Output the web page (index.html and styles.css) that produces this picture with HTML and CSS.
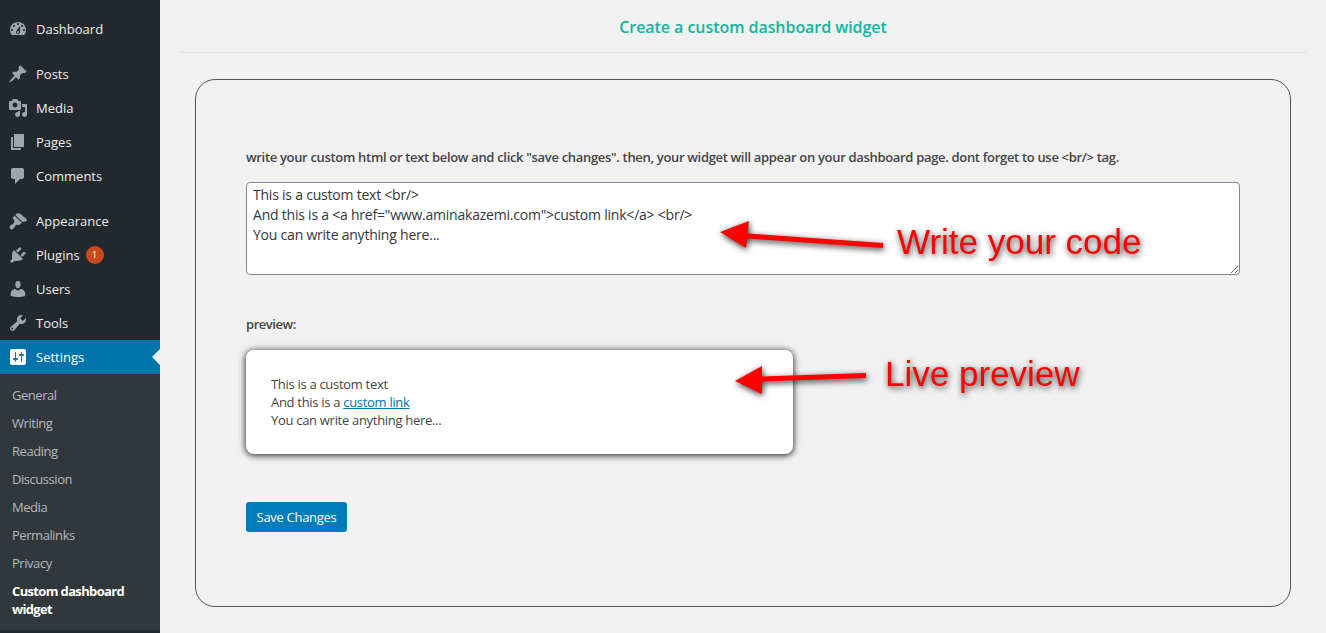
FILE: index.html
```html
<!DOCTYPE html>
<html lang="en">
<head>
<meta charset="utf-8">
<title>Create a custom dashboard widget</title>
<link rel="stylesheet" href="styles.css">
</head>
<body>
<div class="app">
  <nav class="sidebar">
    <ul class="menu">
      <li class="item"><svg class="icon" viewBox="0 0 20 20"><path d="M3.76 16h12.48c1.1-1.37 1.76-3.11 1.76-5 0-4.42-3.58-8-8-8s-8 3.58-8 8c0 1.89.66 3.63 1.76 5zM10 4c.55 0 1 .45 1 1s-.45 1-1 1-1-.45-1-1 .45-1 1-1zM6 6c.55 0 1 .45 1 1s-.45 1-1 1-1-.45-1-1 .45-1 1-1zm8 0c.55 0 1 .45 1 1s-.45 1-1 1-1-.45-1-1 .45-1 1-1zm-5.37 5.55L12 7v6c0 1.1-.9 2-2 2s-2-.9-2-2c0-.57.24-1.08.63-1.45zM4 10c.55 0 1 .45 1 1s-.45 1-1 1-1-.45-1-1 .45-1 1-1zm12 0c.55 0 1 .45 1 1s-.45 1-1 1-1-.45-1-1 .45-1 1-1zm-5 3c0-.55-.45-1-1-1s-1 .45-1 1 .45 1 1 1 1-.45 1-1z"/></svg>Dashboard</li>
      <li class="sep"></li>
      <li class="item"><svg class="icon" viewBox="0 0 20 20"><path d="M10.44 3.02l1.82-1.82 6.36 6.35-1.83 1.82c-1.05-.68-2.48-.57-3.41.36l-.75.75c-.92.93-1.04 2.35-.35 3.41l-1.83 1.82-2.41-2.41-2.8 2.79c-.42.42-3.38 2.71-3.8 2.29s1.86-3.39 2.28-3.81l2.79-2.79L4.1 9.36l1.83-1.82c1.05.69 2.48.57 3.4-.36l.75-.75c.93-.92 1.05-2.35.36-3.41z"/></svg>Posts</li>
      <li class="item"><svg class="icon" viewBox="0 0 20 20"><path d="M13 11V4c0-.55-.45-1-1-1h-1.67L9 1H5L3.67 3H2c-.55 0-1 .45-1 1v7c0 .55.45 1 1 1h10c.55 0 1-.45 1-1zM7 4.5c1.38 0 2.5 1.12 2.5 2.5S8.38 9.5 7 9.5 4.5 8.38 4.5 7 5.62 4.5 7 4.5zM14 6h5v10.5c0 1.38-1.12 2.5-2.5 2.5S14 17.88 14 16.500s1.12-2.500 2.500-2.500c.17 0 .34.02.5.05V9h-3V6zm-4 8.05V13h2v3.500c0 1.38-1.12 2.500-2.500 2.500S7 17.880 7 16.500 8.120 14 9.500 14c.17 0 .34.02.5.05z"/></svg>Media</li>
      <li class="item"><svg class="icon" viewBox="0 0 20 20"><path d="M6 15V2h10v13H6zm-1 1h8v2H3V5h2v11z"/></svg>Pages</li>
      <li class="item"><svg class="icon" viewBox="0 0 20 20"><path d="M5 2h9c1.1 0 2 .9 2 2v7c0 1.1-.9 2-2 2h-2l-5 5v-5H5c-1.1 0-2-.9-2-2V4c0-1.1.9-2 2-2z"/></svg>Comments</li>
      <li class="sep"></li>
      <li class="item"><svg class="icon" viewBox="0 0 20 20"><path d="M14.48 11.06L7.41 3.99l1.5-1.500c.5-.56 2.300-.47 3.510.32 1.210.8 1.430 1.280 2.660 2.510 1.230 1.220 2.220 1.370 2.850 1.980.63.6 1.070 2.350.48 2.950zM6.700 4.700L13.770 11.770l-2.300 2.300c-1-.4-2.600-.8-3.900.4L5.200 17.800c-.8.8-2.200.8-3 0s-.8-2.200 0-3l3.300-2.400c1.200-1.300.8-2.900.4-3.900L4.400 7z"/></svg>Appearance</li>
      <li class="item"><svg class="icon" viewBox="0 0 20 20"><path d="M13.11 4.36L9.87 7.6 8 5.73l3.24-3.24c.35-.34 1.05-.2 1.56.32.52.51.66 1.21.31 1.55zm-8 1.77l.91-1.12 9.01 9.01-1.19.84c-.71.71-2.63 1.16-3.82 1.16H6.14L4.9 17.26c-.59.59-1.54.59-2.12 0-.59-.58-.59-1.53 0-2.12l1.24-1.24v-3.88c0-1.13.4-3.07 1.09-3.89zm7.26 3.97l3.24-3.24c.34-.35 1.04-.21 1.55.31.52.51.66 1.21.31 1.55l-3.24 3.25z"/></svg>Plugins<span class="badge">1</span></li>
      <li class="item"><svg class="icon" viewBox="0 0 20 20"><path d="M10 9.25c-2.27 0-2.73-3.44-2.73-3.44C7 4.02 7.82 2 9.97 2c2.16 0 2.98 2.02 2.71 3.81 0 0-.41 3.44-2.68 3.44zm0 2.57L12.72 10c2.39 0 4.52 2.33 4.52 4.53v2.49s-3.65 1.13-7.24 1.13c-3.65 0-7.24-1.13-7.24-1.13v-2.49c0-2.25 1.94-4.48 4.47-4.48z"/></svg>Users</li>
      <li class="item"><svg class="icon" viewBox="0 0 20 20"><path d="M16.68 9.77c-1.34 1.34-3.3 1.67-4.95.99l-5.41 6.52c-.99.99-2.59.99-3.57 0-.99-.98-.99-2.58 0-3.57l6.52-5.42c-.68-1.65-.35-3.61.99-4.95 1.28-1.28 3.12-1.62 4.72-1.06l-2.89 2.89 2.82 2.82 2.86-2.87c.53 1.58.18 3.41-1.09 4.67zM4.93 16.14c.39-.39.39-1.02 0-1.41s-1.02-.39-1.41 0-.39 1.02 0 1.41 1.02.39 1.41 0z"/></svg>Tools</li>
      <li class="item active"><svg class="icon" viewBox="0 0 20 20"><path d="M18 16V4c0-1.1-.9-2-2-2H4c-1.1 0-2 .9-2 2v12c0 1.1.9 2 2 2h12c1.1 0 2-.9 2-2zM8 11h1c.55 0 1 .45 1 1s-.45 1-1 1H8v1.500c0 .28-.22.500-.5.500s-.5-.22-.5-.500V13H6c-.55 0-1-.45-1-1s.45-1 1-1h1V5.500c0-.28.22-.500.500-.500s.5.22.5.500V11zm5-2h-1c-.55 0-1-.45-1-1s.45-1 1-1h1V5.500c0-.28.22-.500.500-.500s.5.22.5.500V7h1c.55 0 1 .45 1 1s-.45 1-1 1h-1v5.500c0 .28-.22.500-.5.500s-.5-.22-.5-.500V9z"/></svg>Settings</li>
    </ul>
    <ul class="submenu">
      <li class="subitem">General</li>
      <li class="subitem">Writing</li>
      <li class="subitem">Reading</li>
      <li class="subitem">Discussion</li>
      <li class="subitem">Media</li>
      <li class="subitem">Permalinks</li>
      <li class="subitem">Privacy</li>
      <li class="subitem current">Custom dashboard widget</li>
    </ul>
  </nav>
  <main class="main">
    <h1 class="title">Create a custom dashboard widget</h1>
    <section class="card">
      <p class="note">write your custom html or text below and click "save changes". then, your widget will appear on your dashboard page. dont forget to use &lt;br/&gt; tag.</p>
      <textarea class="code" spellcheck="false">This is a custom text &lt;br/&gt;
And this is a &lt;a href="www.aminakazemi.com"&gt;custom link&lt;/a&gt; &lt;br/&gt;
You can write anything here...</textarea>
      <p class="label">preview:</p>
      <div class="preview">This is a custom text<br>And this is a <a href="#" class="link">custom link</a><br>You can write anything here...</div>
      <button class="save" type="button">Save Changes</button>
    </section>
  </main>
</div>
<svg class="overlay" viewBox="0 0 1326 633">
  <g class="mark">
    <path d="M720 232L749 221L747.500 233.500L883 243V248L747 238.500L746 248Z"/>
    <text class="mark-text" x="897" y="254">Write your code</text>
  </g>
  <g class="mark">
    <path d="M735 381L762 366V376.500L866 373V378L762 381.500V394Z"/>
    <text class="mark-text" x="885" y="386">Live preview</text>
  </g>
</svg>
</body>
</html>
```
FILE: styles.css
```css
* { box-sizing: border-box; }
html, body { margin: 0; padding: 0; height: 633px; overflow: hidden; background: #f1f1f1; }
body { font-family: "Open Sans", "Noto Sans", sans-serif; font-size: 13px; color: #444; position: relative; }
ul { list-style: none; margin: 0; padding: 0; }
.app { display: flex; height: 633px; }
.sidebar { width: 160px; flex: none; background: #23282d; padding-top: 12px; }
.item { position: relative; display: flex; align-items: center; height: 34px; padding-left: 8px; color: #eee; font-size: 13px; letter-spacing: 0; }
.icon { width: 20px; height: 20px; margin-right: 8px; fill: #a0a5aa; flex: none; }
.sep { height: 11px; }
.badge { width: 18px; height: 18px; margin-left: 6px; border-radius: 50%; background: #ca4a1f; color: #fff; font-size: 9px; line-height: 18px; text-align: center; }
.active { background: #0073aa; color: #fff; }
.active .icon { fill: #fff; }
.active::after { content: ""; position: absolute; right: 0; top: 9px; border: 8px solid transparent; border-left-width: 0; border-right-color: #f1f1f1; }
.submenu { background: #32373c; padding: 7px 0; }
.subitem { padding: 5px 12px; font-size: 13px; line-height: 18px; color: #b4b9be; letter-spacing: -0.45px; }
.current { color: #fff; font-weight: 700; letter-spacing: -0.65px; }
.main { flex: 1; margin: 0 20px; min-width: 0; }
.title { margin: 0; height: 53px; padding: 16px 0 0 20px; border-bottom: 1px solid #e2e2e2; text-align: center; font-size: 16px; line-height: 22px; font-weight: 600; color: #10b5a0; letter-spacing: -0.05px; }
.card { height: 528px; margin: 26px 15px 0; padding: 68px 50px 0; border: 1px solid #555; border-radius: 20px; }
.note { margin: 0; font-size: 13px; line-height: 18px; font-weight: 600; color: #444; letter-spacing: -0.32px; white-space: nowrap; }
.code { display: block; width: 994px; height: 93px; margin-top: 16px; padding: 2px 6px; border: 1px solid #7e8993; border-radius: 4px; background: #fff; font-family: inherit; font-size: 14px; line-height: 20px; color: #32373c; letter-spacing: -0.22px; outline: none; }
.label { margin: 40px 0 0; font-size: 13px; line-height: 18px; font-weight: 600; color: #444; letter-spacing: -0.45px; }
.preview { width: 547px; height: 104px; margin-top: 17px; padding: 25px; background: #fff; border-radius: 8px; box-shadow: 0 1px 6px 1px rgba(0,0,0,.75); font-size: 13px; line-height: 18px; color: #444; letter-spacing: -0.3px; }
.link { color: #0073aa; }
.save { display: block; width: 101px; height: 30px; margin-top: 48px; padding: 0; border: 0; border-radius: 3px; background: #007cba; color: #fff; font-family: inherit; font-size: 13px; letter-spacing: -0.3px; }
.overlay { position: absolute; left: 0; top: 0; width: 1326px; height: 633px; pointer-events: none; }
.mark { fill: #f00; filter: drop-shadow(1px 2px 3px rgba(0,0,0,.8)); }
.mark-text { font-family: "Liberation Sans", Arial, sans-serif; font-size: 35px; }
```
